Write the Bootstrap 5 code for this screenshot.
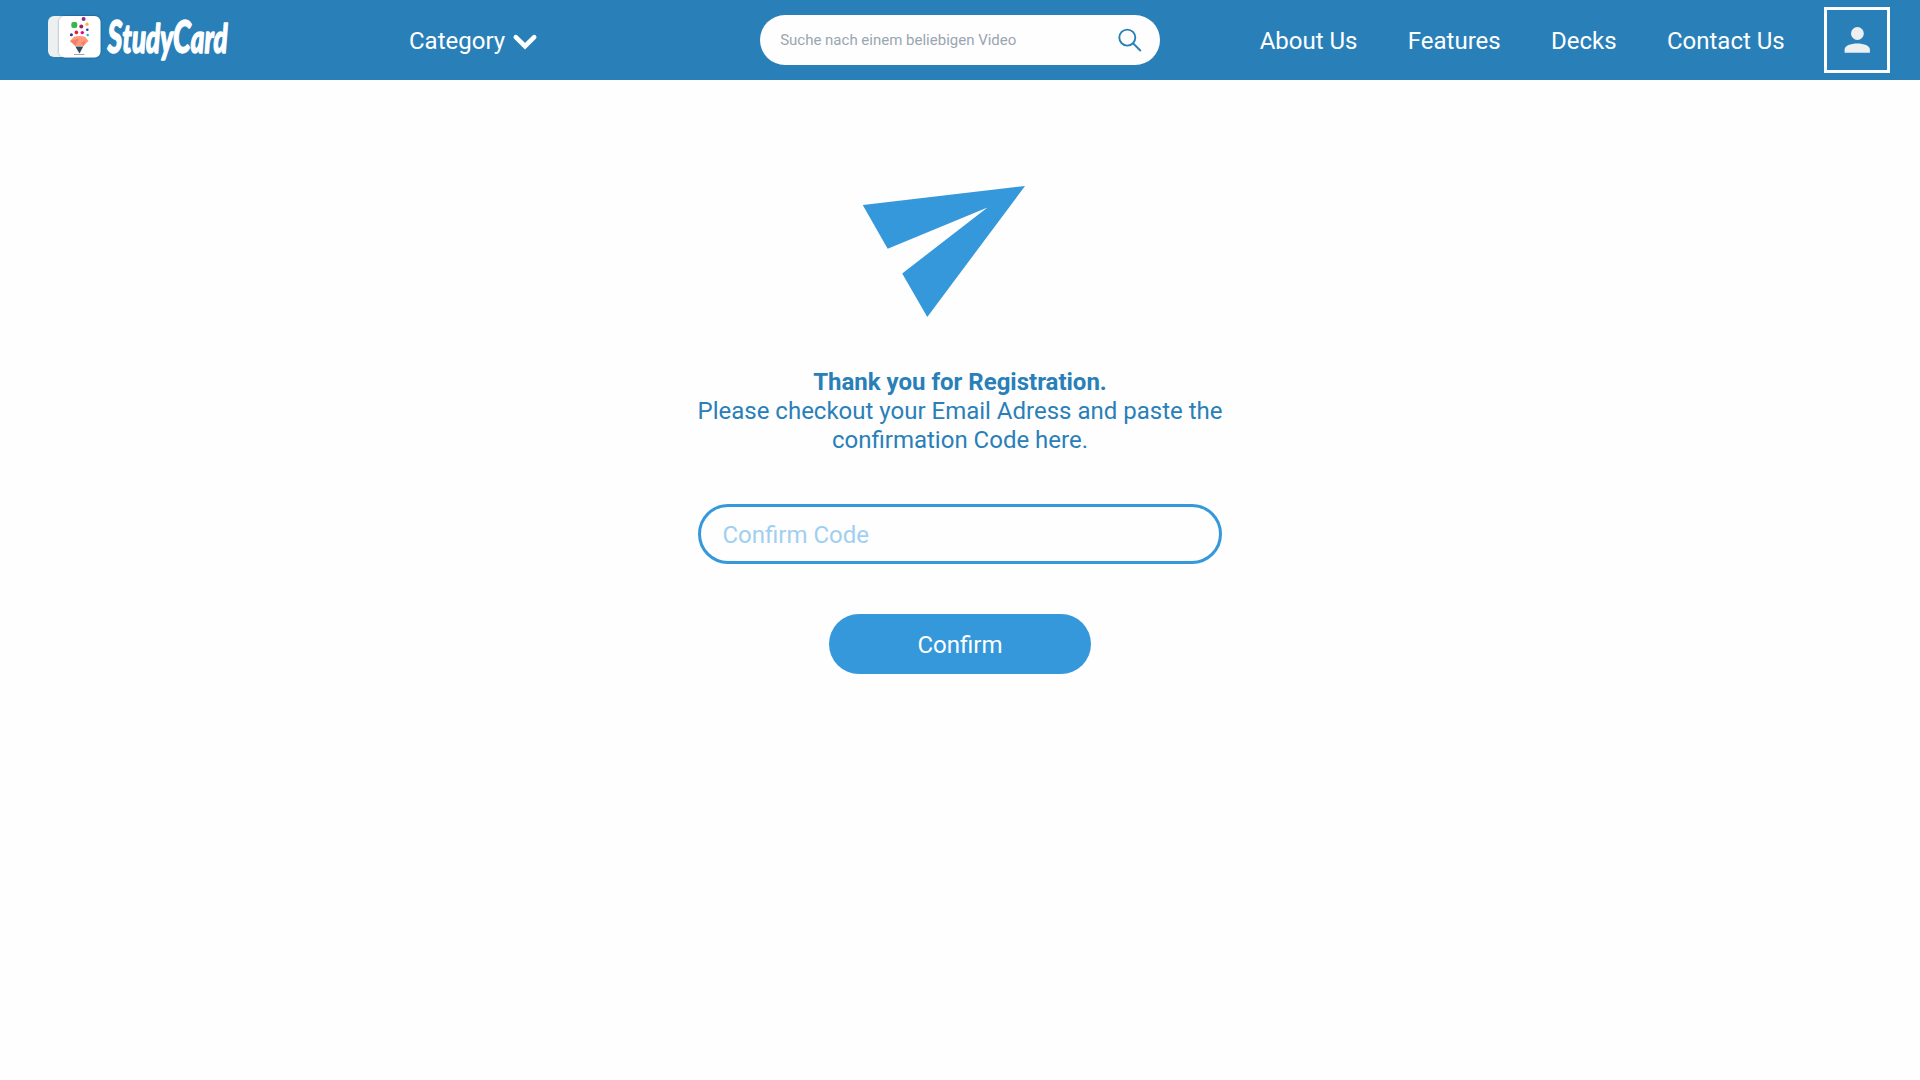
<!DOCTYPE html>
<html lang="en">
<head>
<meta charset="utf-8">
<meta name="viewport" content="width=device-width, initial-scale=1">
<title>StudyCard</title>
<link href="https://cdn.jsdelivr.net/npm/bootstrap@5.3.0/dist/css/bootstrap.min.css" rel="stylesheet">
<style>
body{background:#fefefe;font-family:Roboto,"Liberation Sans",sans-serif;font-size:24px}
.topbar{height:80px;background:#2980b9;padding:0 30px 0 46px}
.logo-art{width:190px;height:80px;overflow:visible}
.category{margin-left:173px;gap:7px;padding-top:2px}
.search-box{width:400px;height:50px;border-radius:25px;margin-left:222px;padding:0 18px 0 20px;background:#fefefe}
.search-box .form-control{font-size:15px;line-height:20px;color:#2980b9}
.search-box .form-control::placeholder{color:#9aa5b1;opacity:1}
.form-control:focus{box-shadow:none}
.main-links{gap:50.3px;margin-right:39.3px;padding-top:2px}
.main-links .nav-link{padding:0;color:#fff}
.user-box{width:66px;height:66px;border:3px solid #fff}
.confirm-form{width:524px;margin-top:106px}
.plane{width:162px;height:131px;margin-left:165px;margin-bottom:51px}
.message{color:#2980b9;line-height:29px;margin:0 -4px 49px}
.code-input{height:60px;border:3px solid #3498db;border-radius:30px;padding:2px 22px 0 21.5px;font-size:24px;background:#fefefe}
.code-input::placeholder{color:#a1cff0;opacity:1}
.confirm-btn{width:262px;height:60px;margin-top:50px;border-radius:30px;background:#3498db;color:#fff;font-size:24px;padding:2px 0 0;border:0}
</style>
</head>
<body>
<nav class="topbar d-flex align-items-center text-white">
  <a href="#" class="d-flex" aria-label="StudyCard">
    <svg class="logo-art" viewBox="46 0 190 80">
      <defs><filter id="soft" x="-20%" y="-20%" width="140%" height="140%"><feDropShadow dx="0" dy="0" stdDeviation="1" flood-opacity=".4"/></filter></defs>
      <rect x="48" y="16" width="40" height="41" rx="6" fill="#ecf0f1"/>
      <rect x="59" y="16" width="41.5" height="41.5" rx="6" fill="#fff" filter="url(#soft)"/>
      <rect x="71.3" y="22" width="6" height="6" rx="2" fill="#39b54a"/>
      <circle cx="83.6" cy="19" r="2" fill="#92278f"/><circle cx="81.3" cy="26.5" r="2" fill="#9e1f63"/>
      <circle cx="87" cy="24.2" r="1.6" fill="#fbb040"/><circle cx="87.3" cy="29.7" r="1.3" fill="#2b3990"/>
      <circle cx="76.4" cy="32.4" r="1.8" fill="#ed1c24"/><circle cx="82.3" cy="32.6" r="1.7" fill="#ec008c"/>
      <circle cx="71.4" cy="34.7" r="1.5" fill="#2b3990"/><circle cx="87.7" cy="35" r="1.2" fill="#27aae1"/>
      <path d="M70 41L74 36.8Q79.5 35 85 36.8L88.5 41L83.5 46H75.5Z" fill="#ff9a7b"/>
      <path d="M70 41L79 38.5L75.5 46ZM81 43L86 40L83.5 46Z" fill="#f47f67"/>
      <path d="M75.3 46.5H83.3L79.5 53.5Z" fill="#34495e"/><path d="M74 54.5H84.5" stroke="#7f8fa3" stroke-width=".8"/>
      <text transform="translate(107.5 53) scale(.665 1.04)" font-family="Lato,sans-serif" font-weight="900" font-style="italic" font-size="39" fill="#fff" stroke="#fff" stroke-width="1.4" stroke-linejoin="round"><tspan font-size="43">S</tspan>tudy<tspan font-size="43">C</tspan>ard</text>
    </svg>
  </a>
  <a href="#" class="category d-flex align-items-center text-white text-decoration-none">
    <span>Category</span>
    <svg width="26" height="20" viewBox="0 0 26 20" fill="none"><path d="M3.8 6.1L13 15.2L22.2 6.1" stroke="#fff" stroke-width="4.6" stroke-linecap="round"/></svg>
  </a>
  <form class="search-box d-flex align-items-center">
    <input class="form-control border-0 bg-transparent p-0" type="text" placeholder="Suche nach einem beliebigen Video">
    <svg class="flex-shrink-0" width="24" height="24" viewBox="0 0 24 24" fill="none" stroke="#2980b9" stroke-width="1.9"><circle cx="9.3" cy="9.6" r="8"/><path d="M15 15.3L22.8 23"/></svg>
  </form>
  <div class="main-links nav ms-auto flex-nowrap">
    <a class="nav-link" href="#">About Us</a><a class="nav-link" href="#">Features</a><a class="nav-link" href="#">Decks</a><a class="nav-link" href="#">Contact Us</a>
  </div>
  <a href="#" class="user-box d-flex align-items-center justify-content-center" aria-label="Account">
    <svg width="26" height="26" viewBox="0 0 26 26" fill="#ecf0f1"><circle cx="13.4" cy="6.5" r="6.4"/><path d="M.6 25.8V22.5C.6 18.5 6.4 16.4 13.2 16.4S25.9 18.5 25.9 22.5V25.8Z"/></svg>
  </a>
</nav>
<main class="d-flex justify-content-center">
  <form class="confirm-form d-flex flex-column">
    <svg class="plane" viewBox="863 186 162 131"><path d="M862.7 205L1025 186L927.3 317L902.2 273.5L987.5 207.5L887.7 248.7Z" fill="#3498db"/></svg>
    <p class="message text-center"><strong>Thank you for Registration.</strong><br>Please checkout your Email Adress and paste the<br>confirmation Code here.</p>
    <input class="code-input form-control" type="text" placeholder="Confirm Code">
    <button class="confirm-btn btn align-self-center" type="button">Confirm</button>
  </form>
</main>
<script src="https://cdn.jsdelivr.net/npm/bootstrap@5.3.0/dist/js/bootstrap.bundle.min.js"></script>
</body>
</html>
